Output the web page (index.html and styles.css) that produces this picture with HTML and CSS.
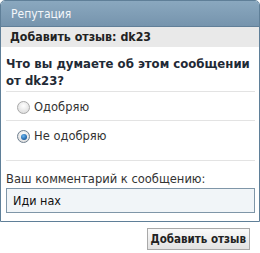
FILE: index.html
```html
<!DOCTYPE html>
<html>
<head>
<meta charset="utf-8">
<link rel="stylesheet" href="styles.css">
</head>
<body>
<div class="page">
  <div class="box">
    <div class="box-head">Репутация</div>
    <div class="box-sub">Добавить отзыв: dk23</div>
    <div class="box-body">
      <div class="question">Что вы думаете об этом сообщении от dk23?</div>
      <label class="opt"><span class="radio"></span>Одобряю</label>
      <label class="opt opt-tall"><span class="radio on"></span>Не одобряю</label>
      <div class="comment">
        <div class="comment-label">Ваш комментарий к сообщению:</div>
        <div class="input">Иди нах</div>
      </div>
    </div>
  </div>
  <div class="actions"><button class="btn">Добавить отзыв</button></div>
</div>
</body>
</html>
```

FILE: styles.css
```css
html, body { margin: 0; padding: 0; background: #fff; }
body { font-family: "DejaVu Sans Condensed", "DejaVu Sans", sans-serif; font-size: 12px; color: #222; }
.page { width: 260px; }
.box {
  width: 258px;
  border: 1px solid #5f7f98;
  border-radius: 5px 5px 0 0;
  overflow: hidden;
}
.box-head {
  height: 25px;
  line-height: 27px;
  padding-left: 10px;
  color: #f4f7fa;
  font-size: 12px;
  background: linear-gradient(#8aa8bf, #7694ad);
  border-bottom: 1px solid #617f98;
}
.box-sub {
  height: 20px;
  line-height: 21px;
  padding-left: 9px;
  background: #e9e9e9;
  font-weight: bold;
  font-size: 12.3px;
  color: #222;
}
.box-body { padding: 0 4px 8px 5px; }
.question {
  font-weight: bold;
  font-size: 13px;
  line-height: 17px;
  padding: 8px 0 2px;
  color: #1f2a36;
  border-bottom: 1px solid #e3e3e3;
}
.opt {
  display: flex;
  align-items: flex-start;
  padding-left: 11px;
  border-bottom: 1px solid #e3e3e3;
  color: #333;
  line-height: 16px;
  font-size: 12.8px;
  box-sizing: border-box;
  height: 29px;
  padding-top: 7px;
}
.opt-tall { height: 40px; }
.radio {
  flex: none;
  width: 13px; height: 13px;
  margin-top: 2px;
  border-radius: 50%;
  border: 1px solid #a9a9a9;
  background: radial-gradient(circle at 50% 35%, #fff, #d6d6d6);
  margin-right: 4px;
  box-sizing: border-box;
  position: relative;
}
.radio.on { border-color: #6f7f8f; }
.radio.on::after {
  content: "";
  position: absolute;
  left: 2.5px; top: 2.5px;
  width: 6px; height: 6px;
  border-radius: 50%;
  background: radial-gradient(circle at 40% 35%, #6cb6ee, #1a5fa5 70%, #0c3f78);
}
.comment { padding-top: 10px; }
.comment-label { line-height: 16px; color: #333; font-size: 12.8px; }
.input {
  margin-top: 1px;
  height: 23px;
  line-height: 23px;
  padding-left: 6px;
  border: 1px solid #7f96a8;
  background: #f1f5f8;
  color: #111;
  font-size: 12.5px;
}
.actions { display: flex; justify-content: flex-end; padding: 6px 10px 0 0; }
.btn {
  font-family: "DejaVu Sans Condensed", "DejaVu Sans", sans-serif;
  font-weight: bold;
  font-size: 11.5px;
  color: #222;
  height: 22px;
  padding: 0 3px;
  border: 1px solid #a9a9a9;
  background: linear-gradient(#fafafa, #e2e2e2);
}
```
